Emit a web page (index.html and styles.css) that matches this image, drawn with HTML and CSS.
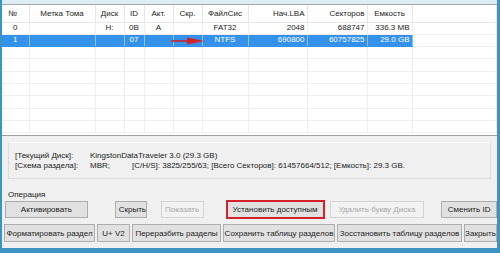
FILE: index.html
```html
<!DOCTYPE html>
<html lang="ru">
<head>
<meta charset="utf-8">
<link rel="stylesheet" href="styles.css">
</head>
<body>
<div class="win">
  <div class="topband"></div>
  <div class="tablewrap">
    <table class="grid">
      <colgroup>
        <col style="width:27px"><col style="width:66px"><col style="width:29px"><col style="width:20px"><col style="width:29px"><col style="width:29px"><col style="width:46px"><col style="width:59px"><col style="width:60px"><col style="width:45px"><col>
      </colgroup>
      <thead>
        <tr>
          <th class="l">№</th><th>Метка Тома</th><th>Диск</th><th>ID</th><th>Акт.</th><th>Скр.</th><th>ФайлСис</th><th class="r">Нач.LBA</th><th class="r">Секторов</th><th>Емкость</th><th></th>
        </tr>
      </thead>
      <tbody>
        <tr>
          <td>0</td><td></td><td>H:</td><td>0B</td><td>A</td><td></td><td>FAT32</td><td class="r">2048</td><td class="r">688747</td><td class="r">336.3 MB</td><td></td>
        </tr>
        <tr class="sel">
          <td>1</td><td></td><td></td><td>07</td><td></td><td class="arrowcell"><svg class="arrow" width="34" height="8" viewBox="0 0 34 8"><line x1="0" y1="4" x2="20" y2="4" stroke="#d4202a" stroke-width="1.6"/><polygon points="16,0.5 33,4 16,7.5" fill="#d4202a"/></svg></td><td>NTFS</td><td class="r">690800</td><td class="r">60757825</td><td class="r">29.0 GB</td><td class="nosel"></td>
        </tr>
        <tr class="e"><td></td><td></td><td></td><td></td><td></td><td></td><td></td><td></td><td></td><td></td><td></td></tr>
        <tr class="e"><td></td><td></td><td></td><td></td><td></td><td></td><td></td><td></td><td></td><td></td><td></td></tr>
        <tr class="e"><td></td><td></td><td></td><td></td><td></td><td></td><td></td><td></td><td></td><td></td><td></td></tr>
        <tr class="e"><td></td><td></td><td></td><td></td><td></td><td></td><td></td><td></td><td></td><td></td><td></td></tr>
        <tr class="e"><td></td><td></td><td></td><td></td><td></td><td></td><td></td><td></td><td></td><td></td><td></td></tr>
        <tr class="e"><td></td><td></td><td></td><td></td><td></td><td></td><td></td><td></td><td></td><td></td><td></td></tr>
        <tr class="e"><td></td><td></td><td></td><td></td><td></td><td></td><td></td><td></td><td></td><td></td><td></td></tr>
      </tbody>
    </table>
  </div>
  <div class="info">
    <div class="infobox">
      <div class="irow"><span class="k">[Текущий Диск]:</span><span>KingstonDataTraveler 3.0 (29.3 GB)</span></div>
      <div class="irow"><span class="k">[Схема раздела]:</span><span class="mbr">MBR;</span><span>[C/H/S]: 3825/255/63; [Всего Секторов]: 61457664/512; [Емкость]: 29.3 GB.</span></div>
    </div>
  </div>
  <div class="ops">
    <div class="legend">Операция</div>
    <div class="brow1">
      <button class="btn w-act">Активировать</button>
      <button class="btn w-hide">Скрыть</button>
      <button class="btn dis w-show">Показать</button>
      <span class="hl"><button class="btn w-set">Установить доступным</button></span>
      <button class="btn dis w-del">Удалить букву Диска</button>
      <button class="btn w-id">Сменить ID</button>
    </div>
    <div class="brow2">
      <button class="btn b1">Форматировать раздел</button>
      <button class="btn b2">U+ V2</button>
      <button class="btn b3">Переразбить разделы</button>
      <button class="btn b4">Сохранить таблицу разделов</button>
      <button class="btn b5">Зосстановить таблицу разделов</button>
      <button class="btn b6">Закрыть</button>
    </div>
  </div>
</div>
</body>
</html>
```
FILE: styles.css
```css
* { box-sizing: border-box; }
html, body { margin: 0; padding: 0; background: #f0f0f0; }
body { width: 500px; height: 253px; overflow: hidden; font-family: "Liberation Sans", Arial, sans-serif; font-size: 8px; color: #222; }

.win {
  width: 500px; height: 253px;
  border-left: 2px solid #3d93c4;
  border-right: 3px solid #3d93c4;
  border-bottom: 5px solid #3d93c4;
  background: #f0f0f0;
  display: flex; flex-direction: column;
}
.topband { height: 5px; background: #dcedf6; border-bottom: 1px solid #a8a8a8; flex: none; }

.tablewrap { height: 131px; background: #fff; border-bottom: 1px solid #a0a0a0; flex: none; overflow: hidden; }
.grid { border-collapse: collapse; table-layout: fixed; width: 495px; }
.grid th { height: 17px; font-weight: normal; text-align: center; padding: 0 2px; border-right: 1px solid #e6e6e6; border-bottom: 1px solid #e6e6e6; color: #222; white-space: nowrap; }
.grid th.l { text-align: left; padding-left: 6px; }
.grid th.r { text-align: right; }
.grid td { height: 12.3px; padding: 0 2px; text-align: center; border-right: 1px solid #efefef; border-bottom: 1px solid #efefef; white-space: nowrap; line-height: 10px; }
.grid td.r { text-align: right; }
.grid tr.sel td { background: #3592ea; color: #fff; border-right-color: #8fc2f2; border-bottom-color: #3592ea; }
.grid tr.sel td.nosel { background: #fff; border-right-color: #efefef; border-bottom-color: #efefef; }
.arrowcell { position: relative; overflow: visible; }
.arrow { position: absolute; left: -3px; top: 2px; }

.info { padding: 6px 6px 0 6px; flex: none; }
.infobox { height: 37px; border: 1px solid #dcdcdc; border-top-color: #fbfbfb; padding: 8px 0 0 6px; }
.irow { display: flex; line-height: 10px; }
.irow .k { width: 75px; }
.irow .mbr { width: 42px; }

.ops { flex: none; padding-top: 11px; }
.legend { padding-left: 6px; line-height: 10px; height: 10px; }
.brow1 { display: flex; align-items: center; margin-top: 1px; height: 17px; padding-left: 3px; }
.brow2 { display: flex; align-items: center; margin-top: 6px; height: 18px; padding-left: 2px; gap: 2px; }

.btn {
  font-family: inherit; font-size: 8px; color: #222;
  background: #e1e1e1; border: 1px solid #adadad; border-radius: 0;
  height: 17px; padding: 0 3px; margin: 0; white-space: nowrap;
}
.brow2 .btn { height: 18px; padding: 0; flex: none; }
.btn.dis { color: #a8a8a8; background: #f2f2f2; border-color: #d4d4d4; }
.w-act { width: 83px; }
.w-hide { width: 32px; margin-left: 27px; }
.w-show { width: 43px; margin-left: 14px; }
.hl { margin-left: 22px; border: 2px solid #d4202a; display: flex; }
.hl .btn { height: 15px; border: none; width: 95px; }
.w-del { width: 95px; margin-left: 5px; }
.w-id { width: 56px; margin-left: 17px; }
.b1 { width: 91px; }
.b2 { width: 33px; }
.b3 { width: 89px; }
.b4 { width: 112px; }
.b5 { width: 125px; }
.b6 { width: 33px; }
```
